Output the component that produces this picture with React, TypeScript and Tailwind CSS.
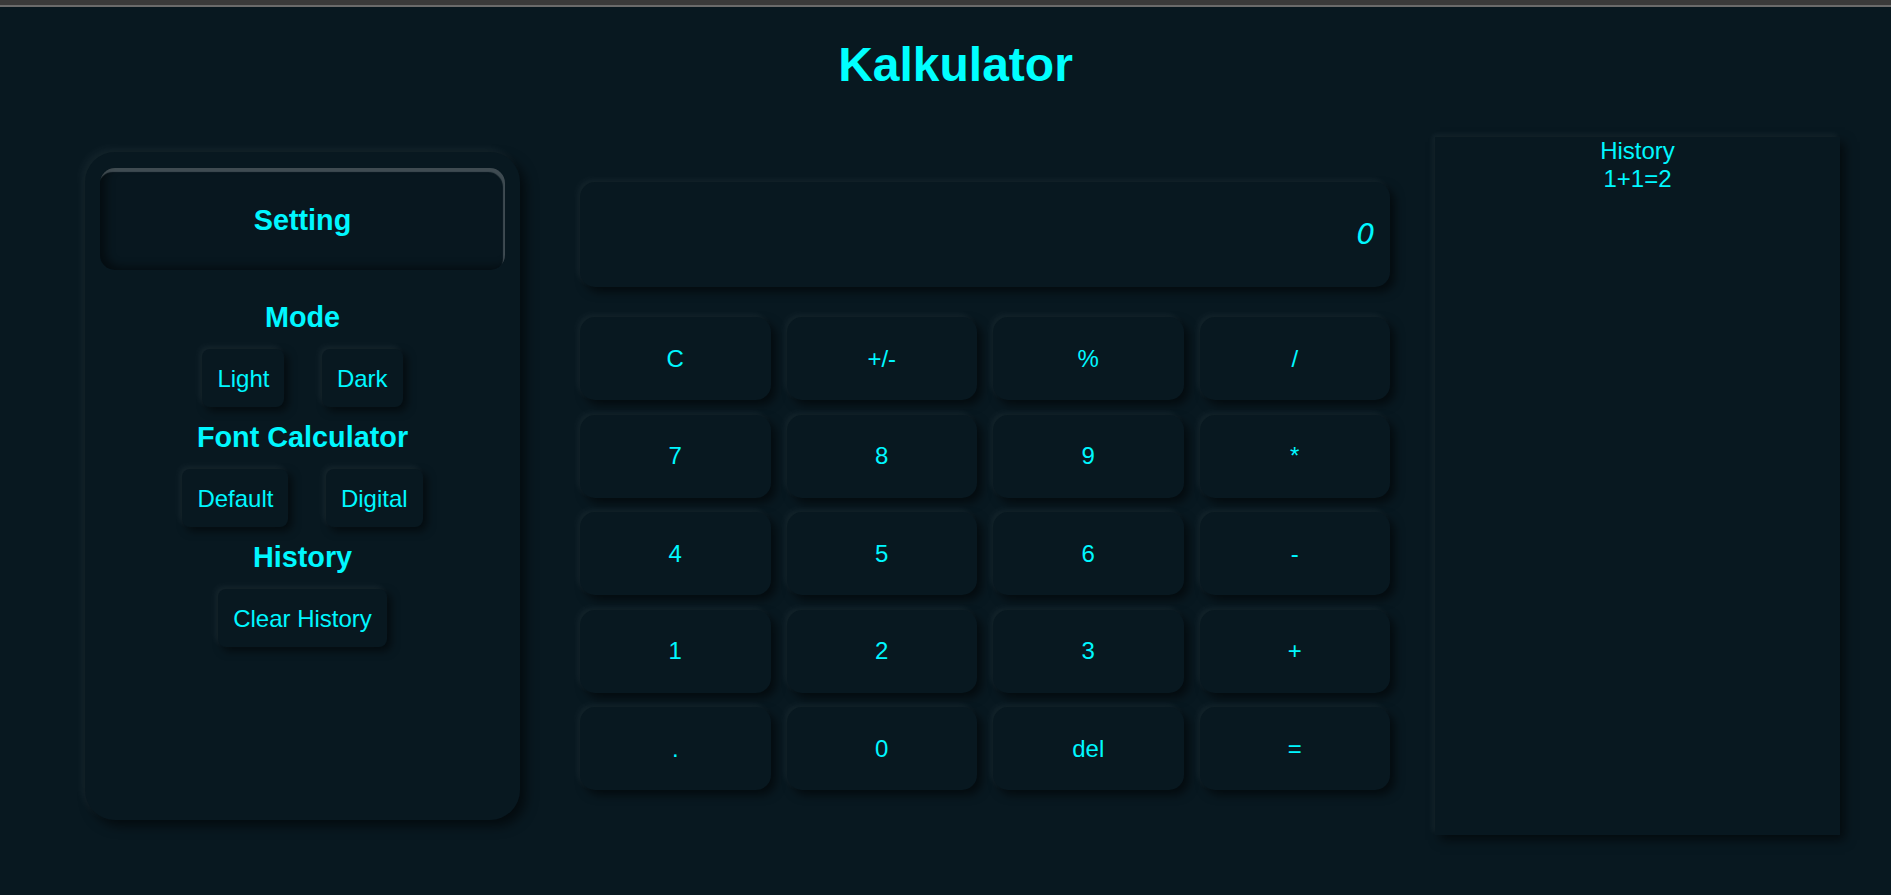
import React from "react";

const keys = ["C", "+/-", "%", "/", "7", "8", "9", "*", "4", "5", "6", "-", "1", "2", "3", "+", ".", "0", "del", "="];

function SmallBtn({ label }: { label: string }) {
  return (
    <button className="h-[58px] px-[15px] rounded-[8px] bg-[#081820] text-[24px] leading-[28px] pt-[1px] text-[#00f7ff] shadow-[-3px_-3px_6px_rgba(255,255,255,0.06),4px_4px_8px_rgba(0,0,0,0.55)]">
      {label}
    </button>
  );
}

function Header({ text }: { text: string }) {
  return <div className="h-[33px] leading-[33px] text-[28.8px] font-bold text-[#00f7ff] text-center">{text}</div>;
}

export default function App() {
  return (
    <div className="min-h-screen w-full bg-[#081820] text-[#00f7ff]" style={{ fontFamily: '"Liberation Sans", Arial, sans-serif' }}>
      <div className="h-[5px] bg-[#3a3a3a]" />
      <div className="h-[2px] bg-[#6b6b6b]" />
      <h1 className="mt-[30px] h-[55px] leading-[55px] text-[48px] font-bold text-center pl-[20px] text-[#00ffff]">Kalkulator</h1>
      <div className="mt-[45px] flex items-center pl-[85px] h-[698px]">
        {/* Settings panel */}
        <div className="w-[435px] h-[668px] rounded-[30px] bg-[#081820] px-[15px] pt-[16px] shadow-[-4px_-4px_8px_rgba(255,255,255,0.05),6px_6px_12px_rgba(0,0,0,0.55)] flex flex-col">
          <div className="h-[102px] pt-[4px] rounded-[15px] bg-[#08171f] flex items-center justify-center text-[28.8px] font-bold shadow-[inset_-2px_4px_1px_rgba(110,120,125,0.55),inset_6px_-3px_8px_rgba(0,0,0,0.45)]">
            Setting
          </div>
          <div className="mt-[30.5px]">
            <Header text="Mode" />
          </div>
          <div className="mt-[15.5px] flex justify-center gap-[37.5px]">
            <SmallBtn label="Light" />
            <SmallBtn label="Dark" />
          </div>
          <div className="mt-[13.5px]">
            <Header text="Font Calculator" />
          </div>
          <div className="mt-[15.5px] flex justify-center gap-[37.5px]">
            <SmallBtn label="Default" />
            <SmallBtn label="Digital" />
          </div>
          <div className="mt-[13.5px]">
            <Header text="History" />
          </div>
          <div className="mt-[15.5px] flex justify-center">
            <SmallBtn label="Clear History" />
          </div>
        </div>

        {/* Calculator */}
        <div className="ml-[30px] w-[870px] p-[30px]">
          <div className="h-[105px] rounded-[15px] bg-[#081820] flex items-center justify-end pr-[15px] shadow-[-3px_-3px_6px_rgba(255,255,255,0.05),5px_5px_10px_rgba(0,0,0,0.55)]">
            <span className="italic text-[29px] text-[#00f7ff]" style={{ fontFamily: '"DejaVu Sans", sans-serif' }}>0</span>
          </div>
          <div className="mt-[30px] grid grid-cols-4 gap-x-[16px] gap-y-[14.5px]">
            {keys.map((k) => (
              <button
                key={k}
                className="h-[83px] rounded-[15px] bg-[#081820] text-[24px] text-[#00f7ff] shadow-[-3px_-3px_6px_rgba(255,255,255,0.05),5px_5px_10px_rgba(0,0,0,0.55)]"
              >
                {k}
              </button>
            ))}
          </div>
        </div>

        {/* History */}
        <div className="ml-[15px] w-[405px] h-[698px] bg-[#081820] text-center text-[24px] leading-[28px] text-[#00f7ff] shadow-[-3px_-3px_6px_rgba(255,255,255,0.05),5px_5px_10px_rgba(0,0,0,0.55)]">
          <div>History</div>
          <div>1+1=2</div>
        </div>
      </div>
    </div>
  );
}
